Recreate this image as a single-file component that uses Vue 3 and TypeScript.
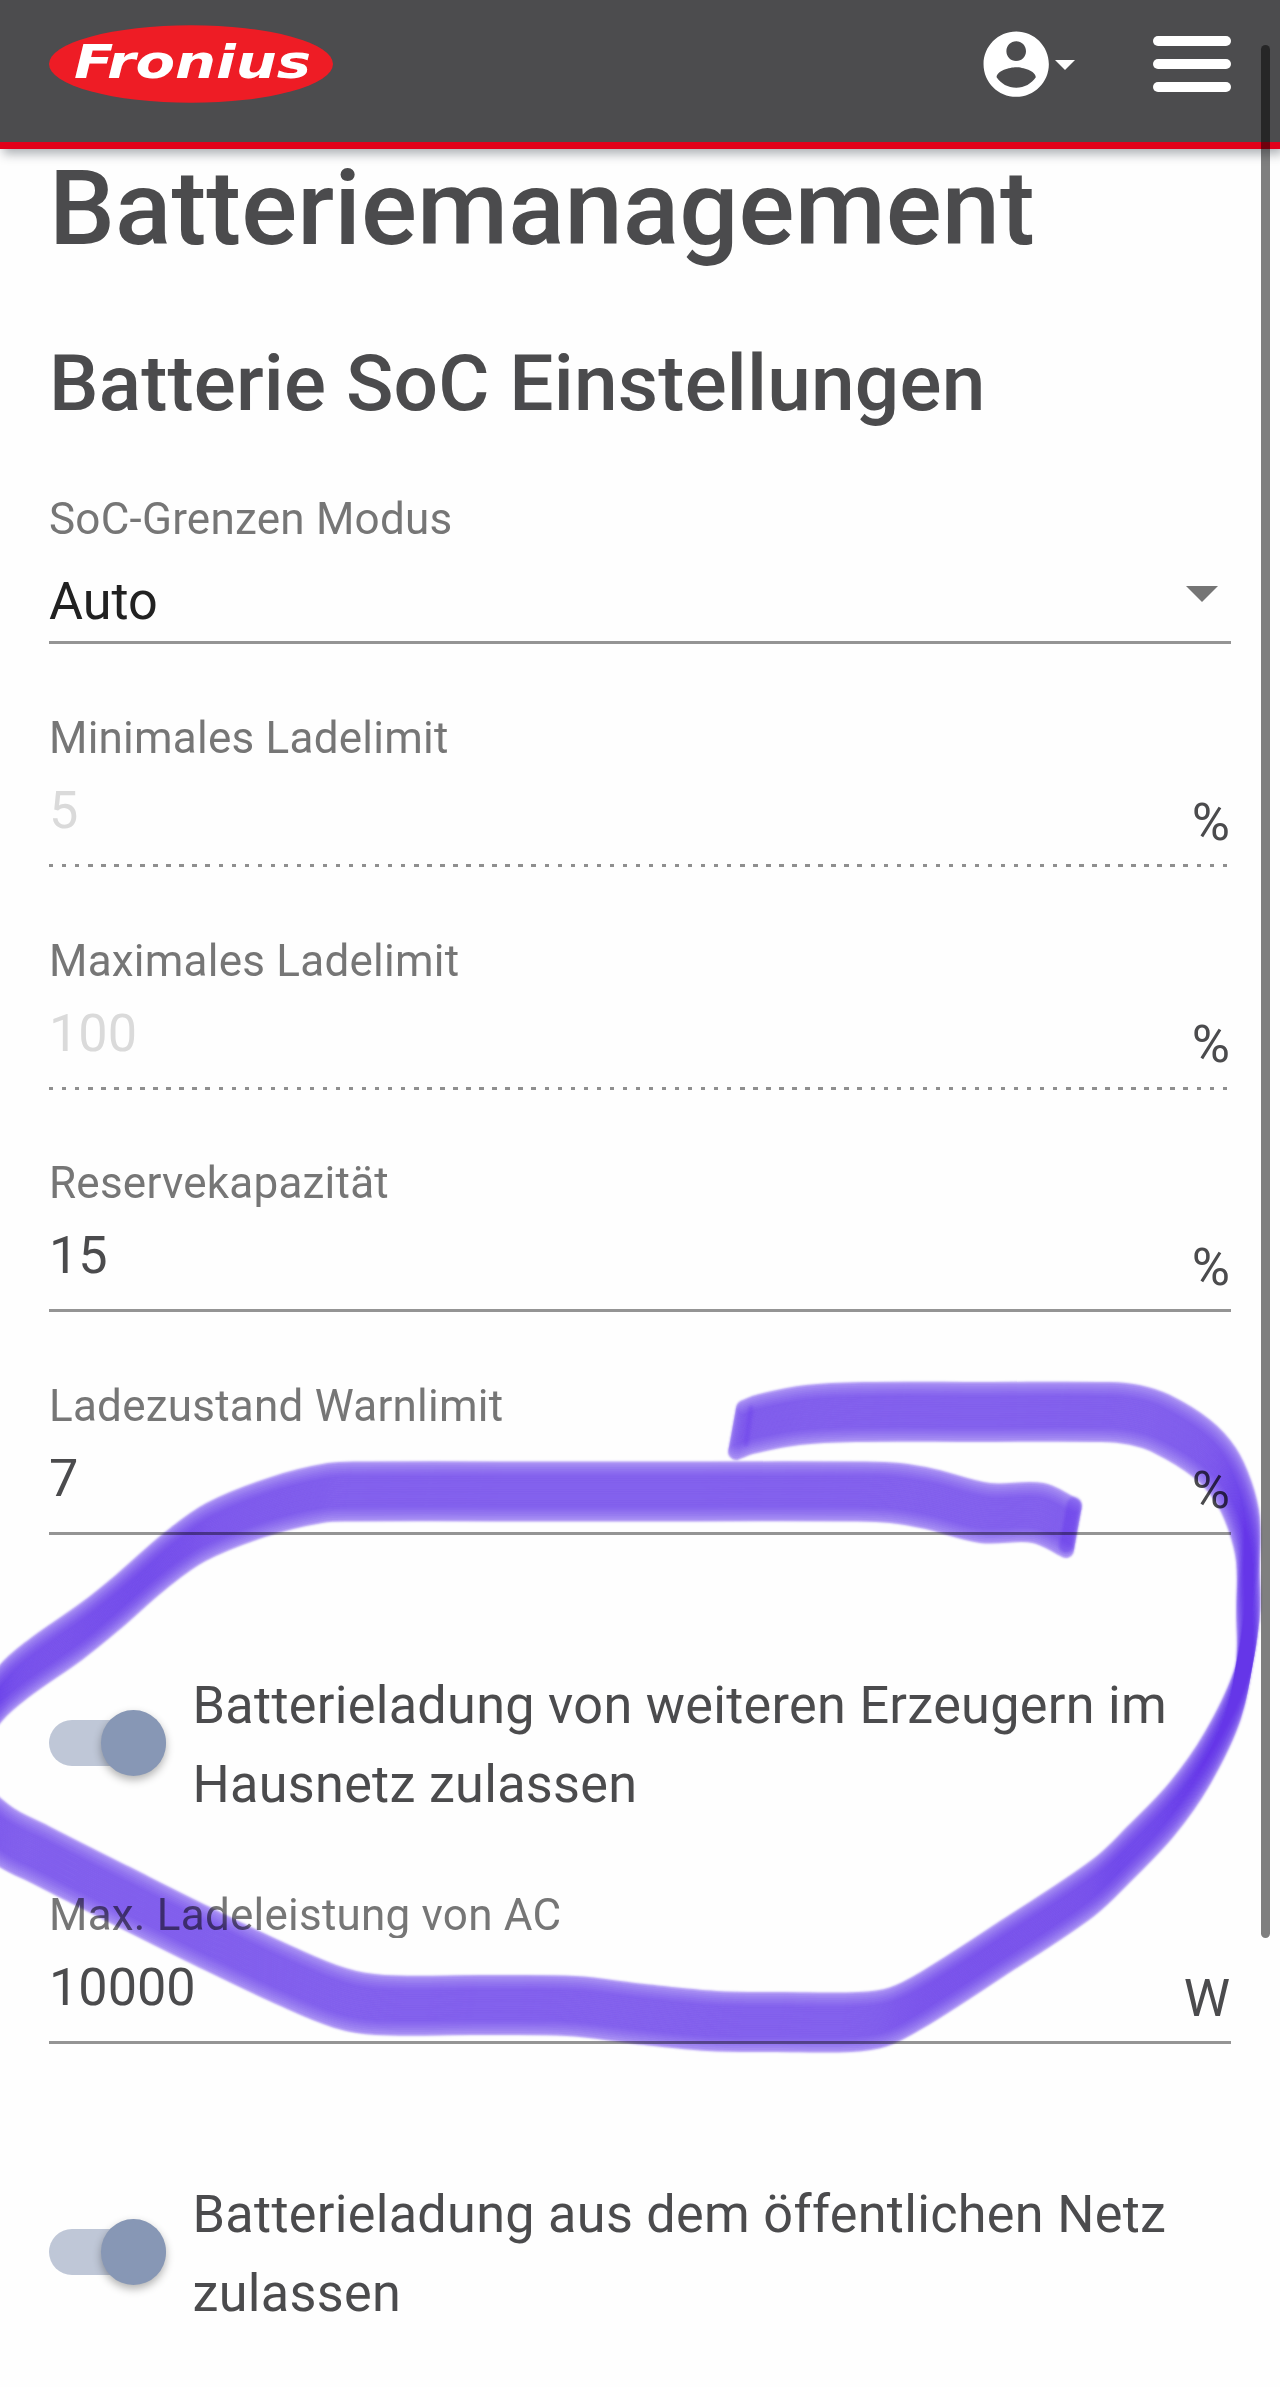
<script setup lang="ts">
interface Field {
  label: string
  value: string
  unit: string
  disabled?: boolean
}

const fields: Field[] = [
  { label: 'Minimales Ladelimit', value: '5', unit: '%', disabled: true },
  { label: 'Maximales Ladelimit', value: '100', unit: '%', disabled: true },
  { label: 'Reservekapazität', value: '15', unit: '%' },
  { label: 'Ladezustand Warnlimit', value: '7', unit: '%' },
]

type Point = [number, number]

// Centre line of the highlighter mark, in page pixels
const marker: Point[] = [
  [740, 1430], [756, 1424], [803, 1415], [860, 1412], [980, 1412], [1105, 1412], [1135, 1415],
  [1162, 1424], [1201, 1448], [1225, 1474], [1240, 1506], [1248, 1540], [1248, 1590],
  [1248, 1638], [1237, 1696], [1207, 1759], [1172, 1809], [1130, 1853], [1093, 1888],
  [1003, 1948], [922, 2000], [888, 2017], [855, 2022], [780, 2022], [712, 2021],
  [640, 2014], [571, 2006], [480, 2005], [380, 2005], [340, 1998], [286, 1976],
  [204, 1937], [122, 1896], [41, 1855], [0, 1833], [-28, 1800], [-26, 1735],
  [0, 1694], [28, 1669], [82, 1631], [118, 1602], [165, 1561], [206, 1532],
  [268, 1507], [325, 1493], [360, 1491.5], [500, 1491.5], [700, 1491.5], [860, 1491.5],
  [895, 1493], [930, 1499], [985, 1513], [1038, 1513], [1070, 1528],
]

function smooth(pts: Point[]): string {
  let d = `M${pts[0][0]} ${pts[0][1]}`
  for (let i = 0; i < pts.length - 1; i++) {
    const a = pts[Math.max(0, i - 1)]
    const b = pts[i]
    const c = pts[i + 1]
    const e = pts[Math.min(pts.length - 1, i + 2)]
    const ab = Math.hypot(b[0] - a[0], b[1] - a[1]) || 1
    const bc = Math.hypot(c[0] - b[0], c[1] - b[1]) || 1
    const ce = Math.hypot(e[0] - c[0], e[1] - c[1]) || 1
    const k1 = (bc / (ab + bc)) * 0.36
    const k2 = (bc / (bc + ce)) * 0.36
    d += `C${b[0] + (c[0] - a[0]) * k1} ${b[1] + (c[1] - a[1]) * k1} `
    d += `${c[0] - (e[0] - b[0]) * k2} ${c[1] - (e[1] - b[1]) * k2} ${c[0]} ${c[1]}`
  }
  return d
}

const markerPath = smooth(marker)
// A slanted chisel nib: the same line repeated along the nib's edge
const nib = Array.from({ length: 25 }, (_, i) => (i - 12) / 12)
</script>

<template>
  <div class="page">
    <header class="bar">
      <svg class="logo" width="284" height="78" viewBox="0 0 284 78">
        <ellipse cx="142" cy="39" rx="142" ry="38.7" fill="#ee1c25" />
        <text x="25" y="53" textLength="237" lengthAdjust="spacingAndGlyphs">Fronius</text>
      </svg>
      <div class="actions">
        <svg class="account" width="78.4" height="78.4" viewBox="0 0 24 24" fill="#fff">
          <path d="M12 2C6.48 2 2 6.48 2 12s4.48 10 10 10 10-4.48 10-10S17.52 2 12 2zm0 3c1.66 0 3 1.34 3 3s-1.34 3-3 3-3-1.34-3-3 1.34-3 3-3zm0 14.2c-2.5 0-4.71-1.28-6-3.22.03-1.99 4-3.08 6-3.08 1.99 0 5.97 1.09 6 3.08-1.29 1.94-3.5 3.22-6 3.22z" />
        </svg>
        <span class="caret"></span>
        <span class="menu"><i></i><i></i><i></i></span>
      </div>
    </header>

    <main>
      <h1>Batteriemanagement</h1>
      <h2>Batterie SoC Einstellungen</h2>

      <div class="select">
        <div class="label">SoC-Grenzen Modus</div>
        <div class="choice"><span>Auto</span><span class="arrow"></span></div>
      </div>

      <div v-for="f in fields" :key="f.label" class="field" :class="{ disabled: f.disabled }">
        <div class="label">{{ f.label }}</div>
        <div class="row"><span class="value">{{ f.value }}</span><span class="unit">{{ f.unit }}</span></div>
      </div>

      <div class="toggle">
        <span class="track"><span class="thumb"></span></span>
        <p>Batterieladung von weiteren Erzeugern im Hausnetz zulassen</p>
      </div>

      <div class="field power">
        <div class="label clipped">Max. Ladeleistung von AC</div>
        <div class="row"><span class="value">10000</span><span class="unit">W</span></div>
      </div>

      <div class="toggle">
        <span class="track"><span class="thumb"></span></span>
        <p>Batterieladung aus dem öffentlichen Netz zulassen</p>
      </div>
    </main>

    <svg class="marker" width="1280" height="2387" viewBox="0 0 1280 2387">
      <g fill="none" stroke="#5a2aec" stroke-width="16" stroke-linejoin="round" stroke-linecap="round">
        <g class="wash">
          <path v-for="t in nib" :key="t" :d="markerPath" :transform="`translate(${-4 * t} ${22 * t})`" />
        </g>
        <path
          v-for="t in nib"
          :key="t"
          :d="markerPath"
          :transform="`translate(${-4 * t} ${22 * t})`"
          stroke-opacity="0.087"
        />
        <path class="seam" d="M751 1408L746 1444" stroke-width="5" stroke-opacity="0.25" />
        <path class="seam" d="M1074 1504L1066 1546" stroke-width="14" stroke-opacity="0.35" />
      </g>
    </svg>
    <div class="scrollbar"></div>
  </div>
</template>

<style>
body {
  margin: 0;
  background: #fefefe;
}
</style>

<style scoped>
.page {
  position: relative;
  width: 1280px;
  height: 2387px;
  overflow: hidden;
  background: #fefefe;
  color: #4b4b4d;
  font-family: Roboto, "Liberation Sans", sans-serif;
}
.bar {
  position: relative;
  box-sizing: border-box;
  height: 149px;
  padding: 0 49px;
  display: flex;
  justify-content: space-between;
  align-items: flex-start;
  background: #4c4c4e;
  border-bottom: 7px solid #e2001a;
  box-shadow: 3px 5px 10px rgba(50, 60, 70, 0.4);
}
.logo {
  margin-top: 25px;
}
.logo text {
  font: italic bold 47px "DejaVu Sans", sans-serif;
  fill: #fff;
}
.actions {
  display: flex;
  align-items: center;
  height: 128px;
}
.caret {
  width: 0;
  border: 10px solid transparent;
  border-top-color: #fff;
  border-bottom: 0;
  margin: 1px 78px 0 0;
}
.menu {
  display: flex;
  flex-direction: column;
  gap: 12.4px;
  width: 78px;
}
.menu i {
  height: 10.3px;
  border-radius: 5px;
  background: #fff;
}
main {
  padding: 0 49px;
}
h1,
h2,
p {
  margin: 0;
}
h1 {
  padding-top: 1px;
  font-size: 104.5px;
  font-weight: 500;
  letter-spacing: 0.08px;
  line-height: 118px;
  white-space: nowrap;
}
h2 {
  margin-top: 68px;
  font-size: 78.4px;
  font-weight: 500;
  letter-spacing: 0.2px;
  line-height: 94px;
  white-space: nowrap;
}
.label {
  height: 52px;
  font-size: 44px;
  letter-spacing: 0.23px;
  line-height: 52px;
  color: #767676;
  white-space: nowrap;
}
.clipped {
  height: 49px;
  overflow: hidden;
}
.select {
  box-sizing: border-box;
  height: 151px;
  margin: 63px 0 68px;
  border-bottom: 3px solid #949494;
}
.choice {
  display: flex;
  justify-content: space-between;
  margin-top: 26.5px;
  font-size: 52.2px;
  line-height: 60px;
  color: #212121;
}
.arrow {
  width: 0;
  height: 0;
  margin: 14px 13px 0 0;
  border: 16px solid transparent;
  border-top-color: #757575;
  border-bottom: 0;
}
.field {
  box-sizing: border-box;
  height: 155px;
  margin-bottom: 67.7px;
  border-bottom: 3px solid #949494;
}
.field.disabled {
  border-bottom: 0;
  background: repeating-linear-gradient(90deg, #8f8f8f 0 4.4px, transparent 4.4px 13.04px) left bottom / 1178px 3px no-repeat;
}
.row {
  display: flex;
  justify-content: space-between;
  margin-top: 17px;
  font-size: 52.2px;
  line-height: 60px;
}
.clipped + .row {
  margin-top: 20px;
}
.disabled .value {
  color: #dadada;
}
.unit {
  margin: 11.5px 1px 0 0;
}
.toggle {
  display: flex;
  align-items: center;
  gap: 26.5px;
  margin-top: 131.4px;
  font-size: 52.2px;
  letter-spacing: 0.3px;
  line-height: 78.4px;
}
.toggle p {
  position: relative;
  top: 1px;
  width: 1010px;
}
.track {
  flex: none;
  display: flex;
  align-items: center;
  justify-content: flex-end;
  width: 117px;
  height: 46px;
  margin-bottom: 3.5px;
  border-radius: 23px;
  background: #bfc7d7;
}
.thumb {
  flex: none;
  width: 65.3px;
  height: 65.3px;
  border-radius: 50%;
  background: #8797b5;
  box-shadow: 0 4px 8px rgba(0, 0, 0, 0.3);
}
.field.power {
  margin: 65.7px 0 0;
}
.marker {
  position: absolute;
  left: 0;
  top: 0;
  mix-blend-mode: multiply;
}
.wash {
  opacity: 0.45;
  filter: blur(1px);
}
.seam {
  filter: blur(1.5px);
}
.scrollbar {
  position: absolute;
  left: 1260.5px;
  top: 45px;
  width: 9.5px;
  height: 1893px;
  border-radius: 5px;
  background: rgba(0, 0, 0, 0.5);
}
</style>
